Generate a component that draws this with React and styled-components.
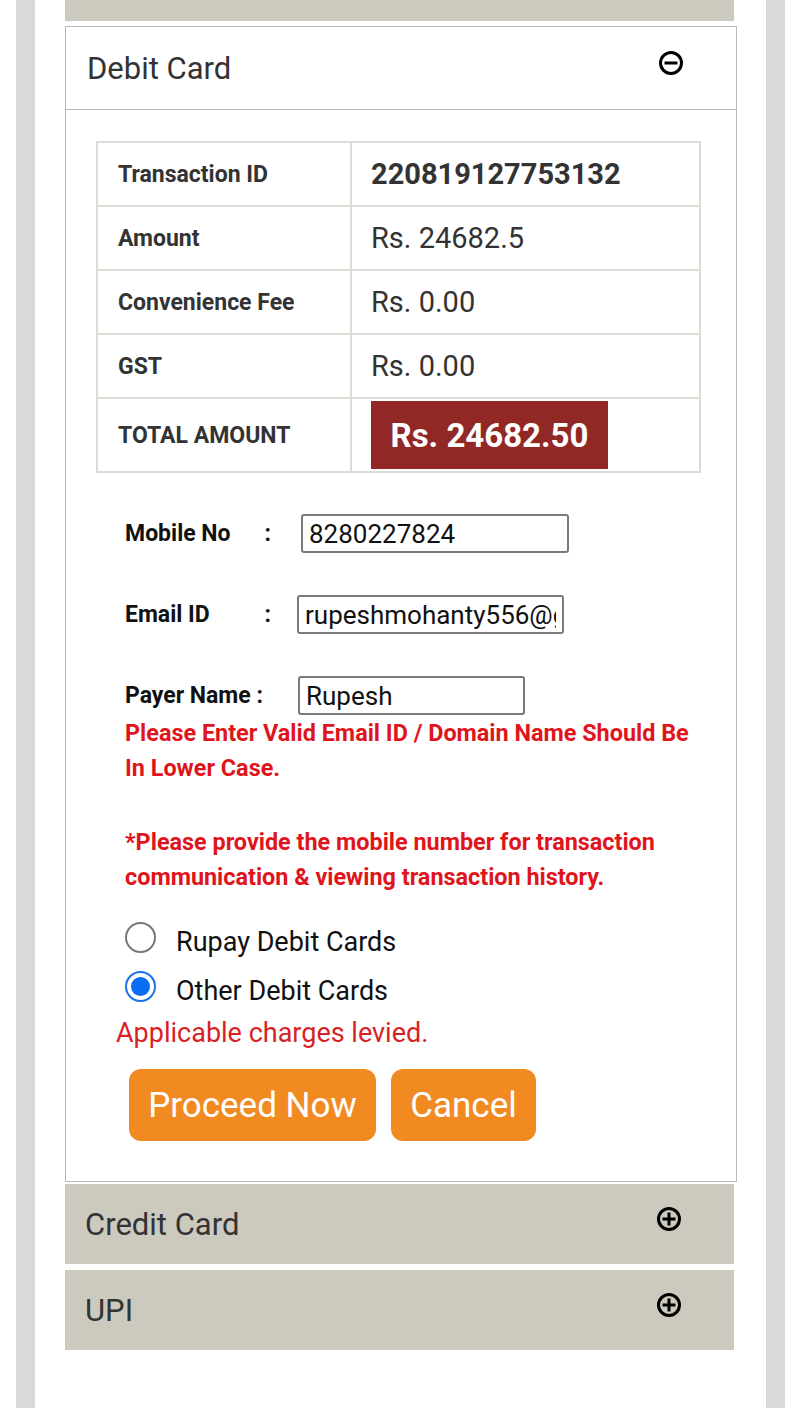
import React, { useState } from "react";
import styled, { createGlobalStyle } from "styled-components";

const GlobalStyle = createGlobalStyle`
  body {
    margin: 0;
    background: #fff;
    font-family: Roboto, "Liberation Sans", sans-serif;
  }
`;

const Page = styled.div`
  padding: 0 15px 0 16px;
`;

const Frame = styled.div`
  min-height: 1408px;
  border-left: 19px solid #d9d9d9;
  border-right: 19px solid #d9d9d9;
  padding-left: 30px;
`;

const Column = styled.div`
  width: 672px;
  display: flex;
  flex-direction: column;
`;

const Strip = styled.div`
  width: 669px;
  height: 21px;
  background: #cccabf;
  margin-bottom: 5px;
`;

const Panel = styled.div`
  border: 1px solid #b8b8b8;
  background: #fff;
`;

const Header = styled.div`
  display: flex;
  align-items: center;
  justify-content: space-between;
  box-sizing: border-box;
  height: ${(p) => (p.open ? "83px" : "80px")};
  width: ${(p) => (p.open ? "auto" : "669px")};
  padding: 0 52px 0 ${(p) => (p.open ? "21px" : "20px")};
  background: ${(p) => (p.open ? "#fff" : "#cccabf")};
  border-bottom: ${(p) => (p.open ? "1px solid #b8b8b8" : "none")};
  margin-top: ${(p) => p.gap || 0}px;
  font-size: 31px;
  color: #333;
  cursor: pointer;
`;

const HeaderIcon = styled.svg`
  width: 26px;
  height: 26px;
  margin-top: -11px;
`;

const Body = styled.div`
  padding: 31px 0 40px 30px;
`;

const Table = styled.table`
  width: 605px;
  border-collapse: collapse;
  border: 2px solid #dcdcd5;
  margin-bottom: 41px;
`;

const Row = styled.tr`
  height: ${(p) => (p.tall ? "74px" : "64px")};
`;

const Label = styled.td`
  width: 232px;
  padding: 0 0 0 20px;
  border: 2px solid #dcdcd5;
  font-size: 23px;
  font-weight: 700;
  color: #333;
`;

const Value = styled.td`
  padding: 0 0 0 19px;
  border: 2px solid #dcdcd5;
  font-size: 29px;
  font-weight: ${(p) => (p.bold ? 700 : 400)};
  color: #333;
`;

const TotalCell = styled.td`
  padding: 1px 0 1px 19px;
  border: 2px solid #dcdcd5;
`;

const TotalBox = styled.div`
  display: flex;
  align-items: center;
  justify-content: center;
  width: 237px;
  height: 68px;
  background: #922826;
  color: #fff;
  font-size: 33px;
  font-weight: 700;
`;

const Form = styled.div`
  padding-left: 29px;
  display: flex;
  flex-direction: column;
`;

const FieldRow = styled.div`
  display: flex;
  align-items: center;
  height: 39px;
  margin-bottom: ${(p) => p.mb || 0}px;
`;

const FieldLabel = styled.label`
  width: ${(p) => p.w}px;
  font-size: 23px;
  font-weight: 700;
  color: #111;
  display: flex;
  justify-content: space-between;
  padding-right: ${(p) => p.pr || 0}px;
  box-sizing: border-box;
`;

const TextInput = styled.input`
  box-sizing: border-box;
  width: ${(p) => p.w}px;
  height: 39px;
  border: 2px solid #7a7a7a;
  border-radius: 3px;
  padding: 0 6px;
  font-family: Roboto, "Liberation Sans", sans-serif;
  font-size: 26px;
  color: #111;
  outline: none;
`;

const ErrorText = styled.p`
  margin: ${(p) => p.mt || 0}px 0 0;
  font-size: 23.4px;
  font-weight: 700;
  line-height: 35px;
  color: #e0151c;
  white-space: nowrap;
`;

const RadioList = styled.div`
  margin-top: 29px;
  display: flex;
  flex-direction: column;
  gap: 19px;
`;

const RadioRow = styled.label`
  display: flex;
  align-items: center;
  height: 30px;
  font-size: 27px;
  color: #111;
  cursor: pointer;
`;

const RadioText = styled.span`
  margin-top: 6px;
`;

const RadioDot = styled.span`
  box-sizing: border-box;
  width: 31px;
  height: 31px;
  border-radius: 50%;
  border: 2px solid ${(p) => (p.checked ? "#1a73e8" : "#777")};
  display: flex;
  align-items: center;
  justify-content: center;
  margin-right: 20px;
  margin-top: -4px;
  &::after {
    content: "";
    width: 19px;
    height: 19px;
    border-radius: 50%;
    background: ${(p) => (p.checked ? "#0a6cf0" : "transparent")};
  }
`;

const Charges = styled.p`
  margin: 14px 0 0 -9px;
  font-size: 27px;
  line-height: 32px;
  color: #d81f26;
`;

const Buttons = styled.div`
  display: flex;
  gap: 15px;
  margin: 20px 0 0 4px;
`;

const Button = styled.button`
  height: 72px;
  padding: 0;
  width: ${(p) => p.w}px;
  border: none;
  border-radius: 12px;
  background: #f28a22;
  color: #fff;
  font-family: Roboto, "Liberation Sans", sans-serif;
  font-size: 35px;
  cursor: pointer;
`;

const CircleIcon = ({ plus }) => (
  <HeaderIcon viewBox="0 0 26 26">
    <circle cx="13" cy="13" r="10.5" fill="none" stroke="#000" strokeWidth="3" />
    <rect x="6.5" y="11.5" width="13" height="3" fill="#000" />
    {plus && <rect x="11.5" y="6.5" width="3" height="13" fill="#000" />}
  </HeaderIcon>
);

const rows = [
  { label: "Transaction ID", value: "220819127753132", bold: true },
  { label: "Amount", value: "Rs. 24682.5" },
  { label: "Convenience Fee", value: "Rs. 0.00" },
  { label: "GST", value: "Rs. 0.00" },
];

export default function App() {
  const [card, setCard] = useState("other");

  return (
    <Page>
      <GlobalStyle />
      <Frame>
        <Column>
          <Strip />
          <Panel>
            <Header open>
              Debit Card
              <CircleIcon />
            </Header>
            <Body>
              <Table>
                <tbody>
                  {rows.map((r) => (
                    <Row key={r.label}>
                      <Label>{r.label}</Label>
                      <Value bold={r.bold}>{r.value}</Value>
                    </Row>
                  ))}
                  <Row tall>
                    <Label>TOTAL AMOUNT</Label>
                    <TotalCell>
                      <TotalBox>Rs. 24682.50</TotalBox>
                    </TotalCell>
                  </Row>
                </tbody>
              </Table>
              <Form>
                <FieldRow mb={42}>
                  <FieldLabel w={176} pr={30}>
                    <span>Mobile No</span>
                    <span>:</span>
                  </FieldLabel>
                  <TextInput w={268} defaultValue="8280227824" />
                </FieldRow>
                <FieldRow mb={42}>
                  <FieldLabel w={172} pr={26}>
                    <span>Email ID</span>
                    <span>:</span>
                  </FieldLabel>
                  <TextInput w={267} defaultValue="rupeshmohanty556@gmail.com" />
                </FieldRow>
                <FieldRow>
                  <FieldLabel w={173}>
                    <span>Payer Name :</span>
                  </FieldLabel>
                  <TextInput w={227} defaultValue="Rupesh" />
                </FieldRow>
                <ErrorText mt={1}>
                  Please Enter Valid Email ID / Domain Name Should Be
                  <br />
                  In Lower Case.
                </ErrorText>
                <ErrorText mt={39}>
                  *Please provide the mobile number for transaction
                  <br />
                  communication &amp; viewing transaction history.
                </ErrorText>
                <RadioList>
                  <RadioRow onClick={() => setCard("rupay")}>
                    <RadioDot checked={card === "rupay"} />
                    <RadioText>Rupay Debit Cards</RadioText>
                  </RadioRow>
                  <RadioRow onClick={() => setCard("other")}>
                    <RadioDot checked={card === "other"} />
                    <RadioText>Other Debit Cards</RadioText>
                  </RadioRow>
                </RadioList>
                <Charges>Applicable charges levied.</Charges>
                <Buttons>
                  <Button w={247}>Proceed Now</Button>
                  <Button w={145}>Cancel</Button>
                </Buttons>
              </Form>
            </Body>
          </Panel>
          <Header gap={2}>
            Credit Card
            <CircleIcon plus />
          </Header>
          <Header gap={6}>
            UPI
            <CircleIcon plus />
          </Header>
        </Column>
      </Frame>
    </Page>
  );
}
